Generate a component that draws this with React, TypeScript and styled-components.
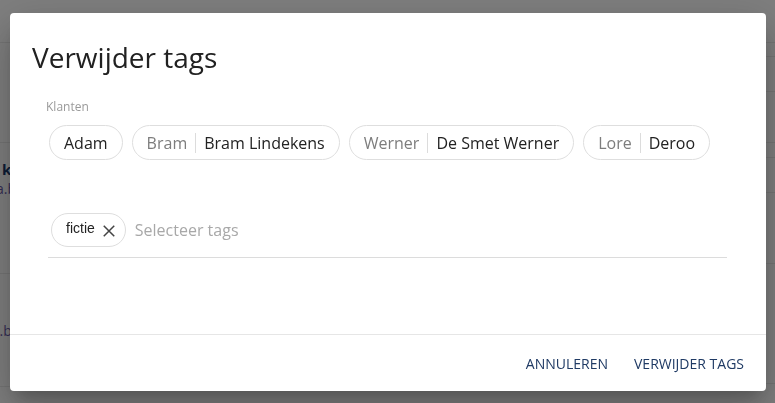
import React from "react";
import styled, { createGlobalStyle } from "styled-components";

const Global = createGlobalStyle`
  html, body { margin: 0; padding: 0; }
  body {
    width: 775px; height: 403px; overflow: hidden;
    background: #ffffff;
    font-family: "Open Sans", "Liberation Sans", sans-serif;
  }
`;

const Page = styled.div`
  display: flex;
  justify-content: space-between;
  width: 775px;
  height: 403px;
  background: #fff;
`;

const Column = styled.div<{ $w: number }>`
  width: ${(p) => p.$w}px;
  display: flex;
  flex-direction: column;
  overflow: hidden;
`;

const Row = styled.div<{ $h: number; $align?: string }>`
  height: ${(p) => p.$h}px;
  flex: none;
  border-bottom: 1px solid #ebebeb;
  box-sizing: border-box;
  display: flex;
  flex-direction: column;
  justify-content: ${(p) => p.$align || "center"};
  font-size: 14px;
  white-space: nowrap;
`;

const Strong = styled.span`
  color: #1b3a6b;
  font-weight: 700;
  font-size: 15px;
  margin-left: 2px;
`;

const Link = styled.span`
  color: #6a5aa8;
  font-size: 14px;
  margin-left: -4px;
`;

const Tag = styled.span`
  color: #3f2a6b;
  font-size: 14px;
  padding-left: 10px;
`;

const Overlay = styled.div`
  position: fixed;
  inset: 0;
  background: rgba(0, 0, 0, 0.5);
  display: flex;
  align-items: flex-start;
  padding: 13px 0 0 10px;
`;

const Dialog = styled.div`
  width: 756px;
  height: 378px;
  background: #fff;
  border-radius: 4px;
  box-shadow: 0 11px 15px -7px rgba(0,0,0,0.2), 0 24px 38px 3px rgba(0,0,0,0.14), 0 9px 46px 8px rgba(0,0,0,0.12);
  display: flex;
  flex-direction: column;
  overflow: hidden;
`;

const Title = styled.h2`
  margin: 0;
  padding: 27px 22px 0;
  font-size: 28px;
  line-height: 34px;
  font-weight: 400;
  color: #212121;
`;

const Body = styled.div`
  flex: 1;
  padding: 0 39px 0 38px;
  display: flex;
  flex-direction: column;
`;

const Label = styled.div`
  margin: 25px 0 0 -2px;
  font-size: 12px;
  line-height: 16px;
  color: #9a9a9a;
`;

const ChipRow = styled.div`
  display: flex;
  gap: 9px;
  margin-top: 10px;
  padding-left: 1px;
`;

const Chip = styled.div`
  height: 35px;
  box-sizing: border-box;
  border: 1px solid #dedede;
  border-radius: 18px;
  padding: 0 14px 0 14px;
  display: flex;
  align-items: center;
  font-size: 16px;
  color: #222;
`;

const First = styled.span`
  color: #7d7d7d;
`;

const Divider = styled.span`
  width: 1px;
  height: 20px;
  background: #dcdcdc;
  margin: 0 8px;
`;

const Field = styled.div`
  margin-top: 53px;
  height: 45px;
  box-sizing: border-box;
  border-bottom: 1px solid #dcdcdc;
  display: flex;
  align-items: flex-start;
  gap: 9px;
  padding-left: 3px;
`;

const TagChip = styled.div`
  height: 34px;
  box-sizing: border-box;
  border: 1px solid #dedede;
  border-radius: 17px;
  padding: 0 7px 4px 14px;
  display: flex;
  align-items: center;
  gap: 5px;
  font-family: "Liberation Sans", Arial, sans-serif;
  font-size: 14px;
  color: #222;
`;

const Remove = styled.svg`
  width: 18px;
  height: 18px;
  margin-top: 6px;
`;

const Placeholder = styled.span`
  font-size: 16px;
  line-height: 34px;
  color: #a8a8a8;
`;

const Footer = styled.div`
  height: 57px;
  box-sizing: border-box;
  border-top: 1px solid #e6e6e6;
  display: flex;
  justify-content: flex-end;
  align-items: center;
  gap: 10px;
  padding: 0 14px 0 0;
`;

const Button = styled.button`
  background: none;
  border: none;
  padding: 6px 8px;
  font-family: "Open Sans", sans-serif;
  font-size: 14px;
  font-weight: 500;
  color: #1f3a64;
  text-transform: uppercase;
  cursor: pointer;
`;

const klanten = [
  { first: "", last: "Adam" },
  { first: "Bram", last: "Bram Lindekens" },
  { first: "Werner", last: "De Smet Werner" },
  { first: "Lore", last: "Deroo" },
];

export default function App() {
  return (
    <>
      <Global />
      <Page>
        <Column $w={40}>
          <Row $h={43} />
          <Row $h={100} />
          <Row $h={131} $align="flex-start">
            <div style={{ height: 16 }} />
            <Strong>k</Strong>
            <Link>a.b</Link>
          </Row>
          <Row $h={113}>
            <Link>l.b</Link>
          </Row>
        </Column>
        <Column $w={40}>
          <Row $h={43} />
          <Row $h={14} />
          <Row $h={35}>
            <Tag>N</Tag>
          </Row>
          <Row $h={51} />
          <Row $h={15} />
          <Row $h={35}>
            <Tag>N</Tag>
          </Row>
          <Row $h={71} />
          <Row $h={120} />
        </Column>
      </Page>
      <Overlay>
        <Dialog>
          <Title>Verwijder tags</Title>
          <Body>
            <Label>Klanten</Label>
            <ChipRow>
              {klanten.map((k) => (
                <Chip key={k.last}>
                  {k.first && (
                    <>
                      <First>{k.first}</First>
                      <Divider />
                    </>
                  )}
                  {k.last}
                </Chip>
              ))}
            </ChipRow>
            <Field>
              <TagChip>
                fictie
                <Remove viewBox="0 0 24 24">
                  <path d="M5 5 L19 19 M19 5 L5 19" stroke="#444" strokeWidth="2" fill="none" />
                </Remove>
              </TagChip>
              <Placeholder>Selecteer tags</Placeholder>
            </Field>
          </Body>
          <Footer>
            <Button>Annuleren</Button>
            <Button>Verwijder tags</Button>
          </Footer>
        </Dialog>
      </Overlay>
    </>
  );
}
